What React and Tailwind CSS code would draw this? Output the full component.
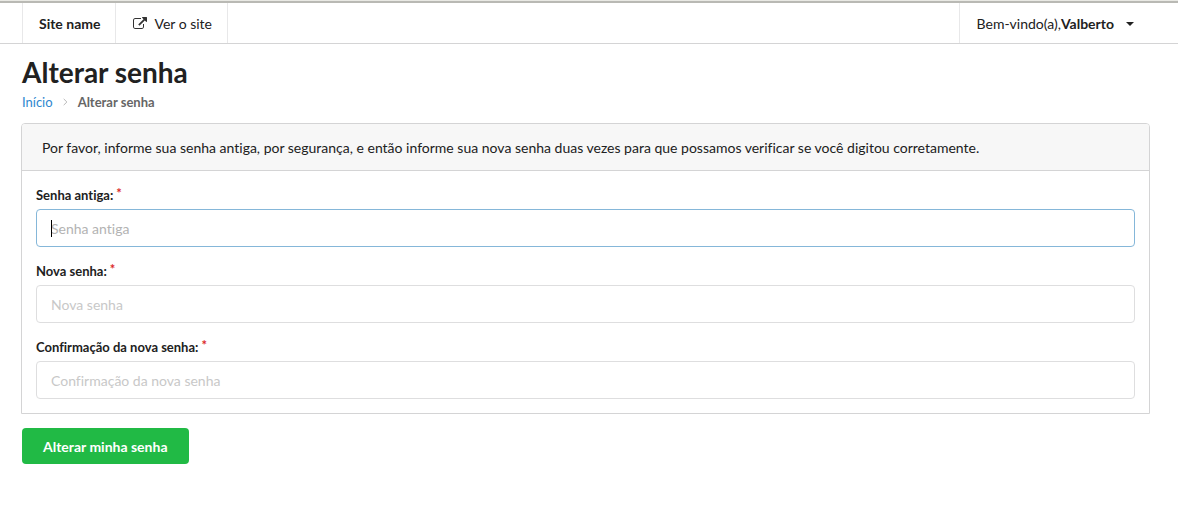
import React, { useState } from 'react';

function ExternalIcon() {
  return (
    <svg viewBox="0 0 1792 1792" className="mb-px size-3.5 shrink-0 fill-[#333333]" aria-hidden="true">
      <path d="M1408 928v320q0 119-84.5 203.5t-203.5 84.5h-832q-119 0-203.5-84.5t-84.5-203.5v-832q0-119 84.5-203.5t203.5-84.5h704q14 0 23 9t9 23v64q0 14-9 23t-23 9h-704q-66 0-113 47t-47 113v832q0 66 47 113t113 47h832q66 0 113-47t47-113v-320q0-14 9-23t23-9h64q14 0 23 9t9 23zm384-864v512q0 26-19 45t-45 19-45-19l-176-176-652 652q-10 10-23 10t-23-10l-114-114q-10-10-10-23t10-23l652-652-176-176q-19-19-19-45t19-45 45-19h512q26 0 45 19t19 45z" />
    </svg>
  );
}

function PasswordField({ id, label, active }) {
  const [value, setValue] = useState('');
  return (
    <div>
      <label htmlFor={id} className="mb-1 flex h-5 items-center text-[13px] leading-5 font-bold">
        {label}:
        <span className="ml-[3px] self-start text-[13px] leading-4 text-[#db2828]">*</span>
      </label>
      <div className="relative">
        <input
          id={id}
          type="password"
          required
          placeholder={label}
          value={value}
          onChange={(e) => setValue(e.target.value)}
          className={
            active
              ? 'block h-[38px] w-full rounded-[4px] border border-[#85b7d9] bg-white px-3.5 text-sm outline-none [font-variant-ligatures:inherit] placeholder:text-[#b3b3b3]'
              : 'block h-[38px] w-full rounded-[4px] border border-[#dededf] bg-white px-3.5 text-sm outline-none [font-variant-ligatures:inherit] placeholder:text-[#c8c8c8] focus:border-[#85b7d9]'
          }
        />
        {active && value === '' && (
          <span className="pointer-events-none absolute top-[11px] left-[15px] h-[17px] w-px bg-black" />
        )}
      </div>
    </div>
  );
}

export default function App() {
  return (
    <div className="font-['Lato',sans-serif] text-sm text-[#212121] [font-variant-ligatures:none]">
      <div className="h-px bg-[#e9e9e4]" />
      <header className="flex h-[43px] border-t-2 border-b border-t-[#b9b9b4] border-b-[#d4d4d5] bg-white pl-[22px]">
        <nav className="flex">
          <a href="#home" className="flex items-center border-x border-[#e8e8e9] pt-0.5 pr-[15px] pl-4 font-bold">
            Site name
          </a>
          <a href="#site" className="flex items-center gap-[7px] border-r border-[#e8e8e9] pt-0.5 pr-[15px] pl-[17px]">
            <ExternalIcon />
            Ver o site
          </a>
        </nav>
        <button type="button" className="ml-auto flex items-center border-l border-[#e8e8e9] pt-0.5 pr-11 pl-[17px]">
          Bem-vindo(a),<b>Valberto</b>
          <svg viewBox="0 0 8 4" className="ml-3 h-1 w-2 fill-current" aria-hidden="true">
            <path d="M0 0h8L4 4z" />
          </svg>
        </button>
      </header>

      <main className="pt-2.5 pr-[29px] pb-6 pl-[22px]">
        <h1 className="text-[28px] leading-9 font-bold">Alterar senha</h1>
        <nav className="mt-0.5 flex h-5 items-center text-[13px] leading-5" aria-label="Breadcrumb">
          <a href="#inicio" className="text-[#2f87cf]">Início</a>
          <svg viewBox="0 0 5 8" className="mx-2.5 h-2 w-[5px] fill-none stroke-[#b8b8b8]" aria-hidden="true">
            <path d="M.7.9 3.9 4 .7 7.1" />
          </svg>
          <span className="font-bold text-[#666666]">Alterar senha</span>
        </nav>

        <form onSubmit={(e) => e.preventDefault()}>
          <section className="-mx-px mt-[11px] rounded-t-[4px] border border-[#d4d4d5]">
            <p className="rounded-t-[3px] border-b border-[#d4d4d5] bg-[#f7f7f7] px-5 pt-3.5 pb-3 leading-5">
              Por favor, informe sua senha antiga, por segurança, e então informe sua nova senha duas vezes para que
              possamos verificar se você digitou corretamente.
            </p>
            <div className="flex flex-col gap-3.5 p-3.5">
              <PasswordField id="old-password" label="Senha antiga" active />
              <PasswordField id="new-password" label="Nova senha" />
              <PasswordField id="confirm-password" label="Confirmação da nova senha" />
            </div>
          </section>
          <button type="submit" className="mt-3.5 h-9 rounded-[4px] bg-[#21ba45] px-[21px] pt-0.5 text-sm font-bold text-white">
            Alterar minha senha
          </button>
        </form>
      </main>
    </div>
  );
}
